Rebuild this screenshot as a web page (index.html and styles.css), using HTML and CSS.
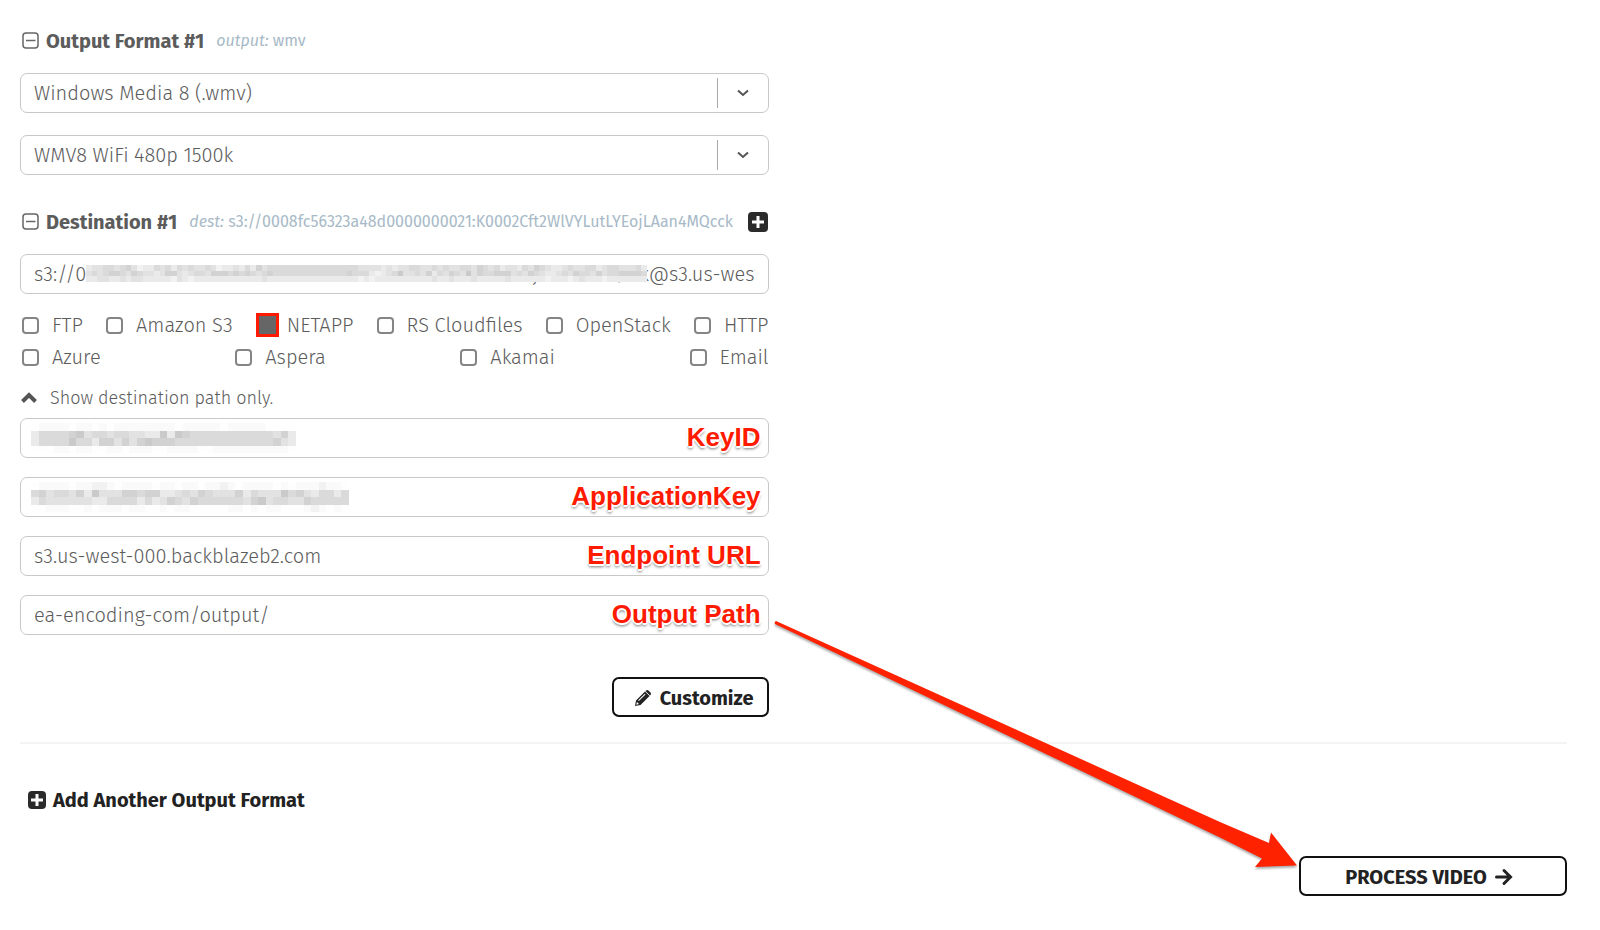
FILE: index.html
```
<!DOCTYPE html>
<html lang="en">
<head>
  <meta charset="UTF-8">
  <title>Output Format</title>
  <link rel="stylesheet" href="styles.css">
</head>
<body>

  <form class="page" onsubmit="return false">
    <div class="columns">
      <div class="column">

        <section class="group">
          <div class="heading">
            <button type="button" class="icon-btn" aria-label="Collapse output format">
              <svg width="18" height="18" viewBox="0 0 18 18"><rect x="1" y="1" width="15" height="15" rx="3"/><path d="M4 8.500h9.500"/></svg>
            </button>
            <h2>Output Format #1</h2>
            <p class="summary"><em>output:</em> wmv</p>
          </div>

          <div class="selects">
            <div class="field">
              <select class="control" aria-label="Output format">
                <option>Windows Media 8 (.wmv)</option>
              </select>
              <span class="arrow"><svg width="12" height="8" viewBox="0 0 12 8"><path d="M1 1.500l5 4.500 5-4.500"/></svg></span>
            </div>
            <div class="field">
              <select class="control" aria-label="Preset">
                <option>WMV8 WiFi 480p 1500k</option>
              </select>
              <span class="arrow"><svg width="12" height="8" viewBox="0 0 12 8"><path d="M1 1.500l5 4.500 5-4.500"/></svg></span>
            </div>
          </div>
        </section>

        <section class="group">
          <div class="heading">
            <button type="button" class="icon-btn" aria-label="Collapse destination">
              <svg width="18" height="18" viewBox="0 0 18 18"><rect x="1" y="1" width="15" height="15" rx="3"/><path d="M4 8.500h9.500"/></svg>
            </button>
            <h2>Destination #1</h2>
            <p class="summary"><em>dest:</em> s3://0008fc56323a48d0000000021:K0002Cft2WlVYLutLYEojLAan4MQcck</p>
            <button type="button" class="icon-btn solid" aria-label="Add destination">
              <svg width="20" height="20" viewBox="0 0 20 20"><rect width="20" height="20" rx="4"/><path d="M10 4v12M4 10h12"/></svg>
            </button>
          </div>

          <div class="field">
            <input type="text" class="control" aria-label="Destination" value="s3://0008fc56323a48d0000000021:K0002Cft2WlVYLutLYEojLAan4MQcck@s3.us-west-000.backblazeb2.com/ea-encoding-com/output/">
            <svg class="mask mask-dest" id="maskDest" width="561" height="17" viewBox="0 0 99 3" preserveAspectRatio="none"></svg>
          </div>

          <div class="types">
            <div class="type-row">
              <label><input type="checkbox">FTP</label>
              <label><input type="checkbox">Amazon S3</label>
              <label class="marked"><input type="checkbox" checked>NETAPP</label>
              <label><input type="checkbox">RS Cloudfiles</label>
              <label><input type="checkbox">OpenStack</label>
              <label><input type="checkbox">HTTP</label>
            </div>
            <div class="type-row">
              <label><input type="checkbox">Azure</label>
              <label><input type="checkbox">Aspera</label>
              <label><input type="checkbox">Akamai</label>
              <label><input type="checkbox">Email</label>
            </div>
          </div>

          <button type="button" class="toggle">
            <svg width="16" height="12" viewBox="0 0 16 12"><path d="M1.500 9.500l6.500-6.500 6.500 6.500"/></svg>
            Show destination path only.
          </button>

          <div class="fields">
            <div class="field">
              <input type="text" class="control" id="keyId" value="0008fc56323a48d0000000021">
              <svg class="mask" id="maskKey" width="265" height="30" viewBox="0 0 35 4" preserveAspectRatio="none"></svg>
              <label class="note" for="keyId">KeyID</label>
            </div>
            <div class="field">
              <input type="text" class="control" id="appKey" value="K0002Cft2WlVYLutLYEojLAan4MQcck">
              <svg class="mask" id="maskApp" width="318" height="30" viewBox="0 0 42 4" preserveAspectRatio="none"></svg>
              <label class="note" for="appKey">ApplicationKey</label>
            </div>
            <div class="field">
              <input type="text" class="control" id="endpoint" value="s3.us-west-000.backblazeb2.com">
              <label class="note" for="endpoint">Endpoint URL</label>
            </div>
            <div class="field">
              <input type="text" class="control" id="outPath" value="ea-encoding-com/output/">
              <label class="note" for="outPath">Output Path</label>
            </div>
          </div>
        </section>

        <button type="button" class="btn customize">
          <svg width="18" height="18" viewBox="0 0 18 18">
            <path fill="#222" d="M1 17l1-5.500L11 2.500l4.500 4.500L6.500 16zM12 1.500q1.200-1.200 2.400 0l2.100 2.100q1.200 1.200 0 2.400l-.5.500-4.500-4.500z"/>
            <path fill="#fff" d="M2.300 15.700l.6-2.700 2.100 2.100zM4.200 11.300l6.600-6.600.7.700-6.600 6.600z"/>
          </svg>
          Customize
        </button>
      </div>
    </div>

    <hr>

    <button type="button" class="add">
      <svg width="18" height="18" viewBox="0 0 18 18"><rect width="18" height="18" rx="4"/><path d="M9 3v12M3 9h12"/></svg>
      Add Another Output Format
    </button>

    <button type="submit" class="btn process">
      PROCESS VIDEO
      <svg width="18" height="18" viewBox="0 0 18 18"><path d="M1.500 9h13M9 2.500L15.500 9 9 15.500" fill="none" stroke="#222" stroke-width="3" stroke-linecap="round"/></svg>
    </button>
  </form>

  <svg class="pointer" viewBox="0 0 1600 930">
    <path d="M776 621L1220 822 1269 843 1271 832.500 1297 865.500 1255 867 1262 858.500 1220 837.500 775 624Q774 622 776 621z"/>
  </svg>

  <script>
    // each digit is the darkness of one block, one string per row
    const masks = {
      maskDest: [
        "344554564233545354544542334353645555555555555555444434344554454544554654534435465433454455345544453",
        "454566546544346643455466656565456555555555555565553234574454635465474655666454654334546554645566665",
        "334433434433333243233333333333343333333333333333232333333333343343334333334333333233323433323333333"
      ],
      maskKey: [
        "01111011010111111110111110111110000",
        "35555674554554433737655555555555463",
        "35555755366464676665555555555555643",
        "00011011001101110011110011111111110"
      ],
      maskApp: [
        "011110112210111101101101121011110101112110",
        "564554637444665663345465444635444756435535",
        "354444443355553534654655555546745544655555",
        "001110010111011001011000001101011000121010"
      ]
    };

    for (const id in masks) {
      const svg = document.getElementById(id);
      masks[id].forEach((row, y) => {
        [...row].forEach((d, x) => {
          const cell = document.createElementNS("http://www.w3.org/2000/svg", "rect");
          const grey = Math.min(254, 258 - d * 8);
          cell.setAttribute("x", x);
          cell.setAttribute("y", y);
          cell.setAttribute("width", 1);
          cell.setAttribute("height", 1);
          cell.setAttribute("fill", `rgb(${grey},${grey},${grey})`);
          svg.append(cell);
        });
      });
    }
  </script>

</body>
</html>
```
FILE: styles.css
```
* {
  box-sizing: border-box;
}

body {
  margin: 0;
  background: #fff;
  color: #5c5c5c;
  font-family: "Fira Sans", "Noto Sans", sans-serif;
  font-size: 20px;
  font-weight: 300;
  line-height: 26px;
}

button, input, select {
  font: inherit;
  color: inherit;
}

button {
  padding: 0;
  border: none;
  background: none;
  cursor: pointer;
}

svg {
  display: block;
  flex: none;
}

.page {
  padding: 28px 33px 0 20px;
}

.columns {
  display: grid;
  grid-template-columns: 15fr 16fr;
}

.column {
  display: flex;
  flex-direction: column;
  min-width: 0;
}

.group {
  margin-bottom: 34px;
}

.heading {
  display: flex;
  align-items: center;
  height: 26px;
  margin-bottom: 19px;
  padding: 0 1px 0 2px;
}

h2 {
  margin: 0 12px 0 6px;
  font-size: 20px;
  font-weight: 700;
  white-space: nowrap;
}

.summary {
  margin: 0;
  color: #a8bac7;
  font-size: 16px;
  font-weight: 400;
  white-space: nowrap;
}

.icon-btn rect, .icon-btn path {
  fill: none;
  stroke: #666;
  stroke-width: 1.5;
}

.solid {
  margin-left: auto;
}

.solid rect, .add rect {
  fill: #2b2b2b;
  stroke: none;
}

.solid path, .add path {
  fill: none;
  stroke: #fff;
  stroke-width: 3;
}

.selects {
  display: grid;
  gap: 22px;
}

.field {
  position: relative;
}

.control {
  display: block;
  width: 100%;
  height: 40px;
  padding: 0 13px;
  border: 1px solid #c8c8c8;
  border-radius: 7px;
  background: #fff;
  appearance: none;
  outline: none;
}

.arrow {
  position: absolute;
  top: 5px;
  right: 0;
  bottom: 5px;
  width: 52px;
  display: flex;
  align-items: center;
  justify-content: center;
  border-left: 1px solid #aaa;
  pointer-events: none;
}

.arrow path {
  fill: none;
  stroke: #555;
  stroke-width: 2;
}

.mask {
  position: absolute;
  left: 11px;
  top: 5px;
  shape-rendering: crispEdges;
  pointer-events: none;
}

.mask-dest {
  left: 66px;
  top: 11px;
}

.types {
  display: grid;
  gap: 6px;
  margin: 18px 0 15px 2px;
}

.type-row {
  display: flex;
  justify-content: space-between;
}

.type-row label {
  display: flex;
  align-items: center;
  gap: 13px;
}

.type-row input {
  appearance: none;
  width: 17px;
  height: 17px;
  margin: 0;
  border: 2px solid #858585;
  border-radius: 4px;
}

.type-row .marked {
  gap: 8px;
}

.type-row .marked input {
  width: 23px;
  height: 24px;
  border: 3px solid #ff1a00;
  border-radius: 0;
  background: #666;
}

.toggle {
  display: flex;
  align-items: center;
  gap: 13px;
  margin-bottom: 7px;
  padding-left: 1px;
  font-size: 18px;
}

.toggle path {
  fill: none;
  stroke: #555;
  stroke-width: 4;
}

.fields {
  display: grid;
  gap: 19px;
}

/* red captions over the right end of the fields */
.note {
  position: absolute;
  top: 4px;
  right: 8px;
  color: #ff1a00;
  font: bold 26px/30px "Liberation Sans", sans-serif;
  text-shadow: -2px 0 #fff, 2px 0 #fff, 0 -2px #fff, 0 2px #fff, 1px 1px #fff, 0 3px 3px #777;
}

.btn {
  display: flex;
  align-items: center;
  justify-content: center;
  gap: 8px;
  height: 40px;
  padding: 2px 13px 0 20px;
  border: 2px solid #111;
  border-radius: 7px;
  background: #fff;
  color: #222;
  font-weight: 700;
}

.customize {
  align-self: flex-end;
  margin-top: 8px;
}

hr {
  height: 2px;
  margin: 25px 0 43px;
  border: none;
  background: #f4f4f4;
}

.add {
  display: flex;
  align-items: center;
  gap: 7px;
  margin-left: 8px;
  color: #222;
  font-weight: 700;
}

.process {
  width: 268px;
  margin: 43px 0 0 auto;
  padding: 1px 8px 0 0;
}

.pointer {
  position: absolute;
  top: 0;
  left: 0;
  width: 100%;
  pointer-events: none;
}

.pointer path {
  fill: #ff2200;
  filter: drop-shadow(0 2px 1px #aaa);
}
```
